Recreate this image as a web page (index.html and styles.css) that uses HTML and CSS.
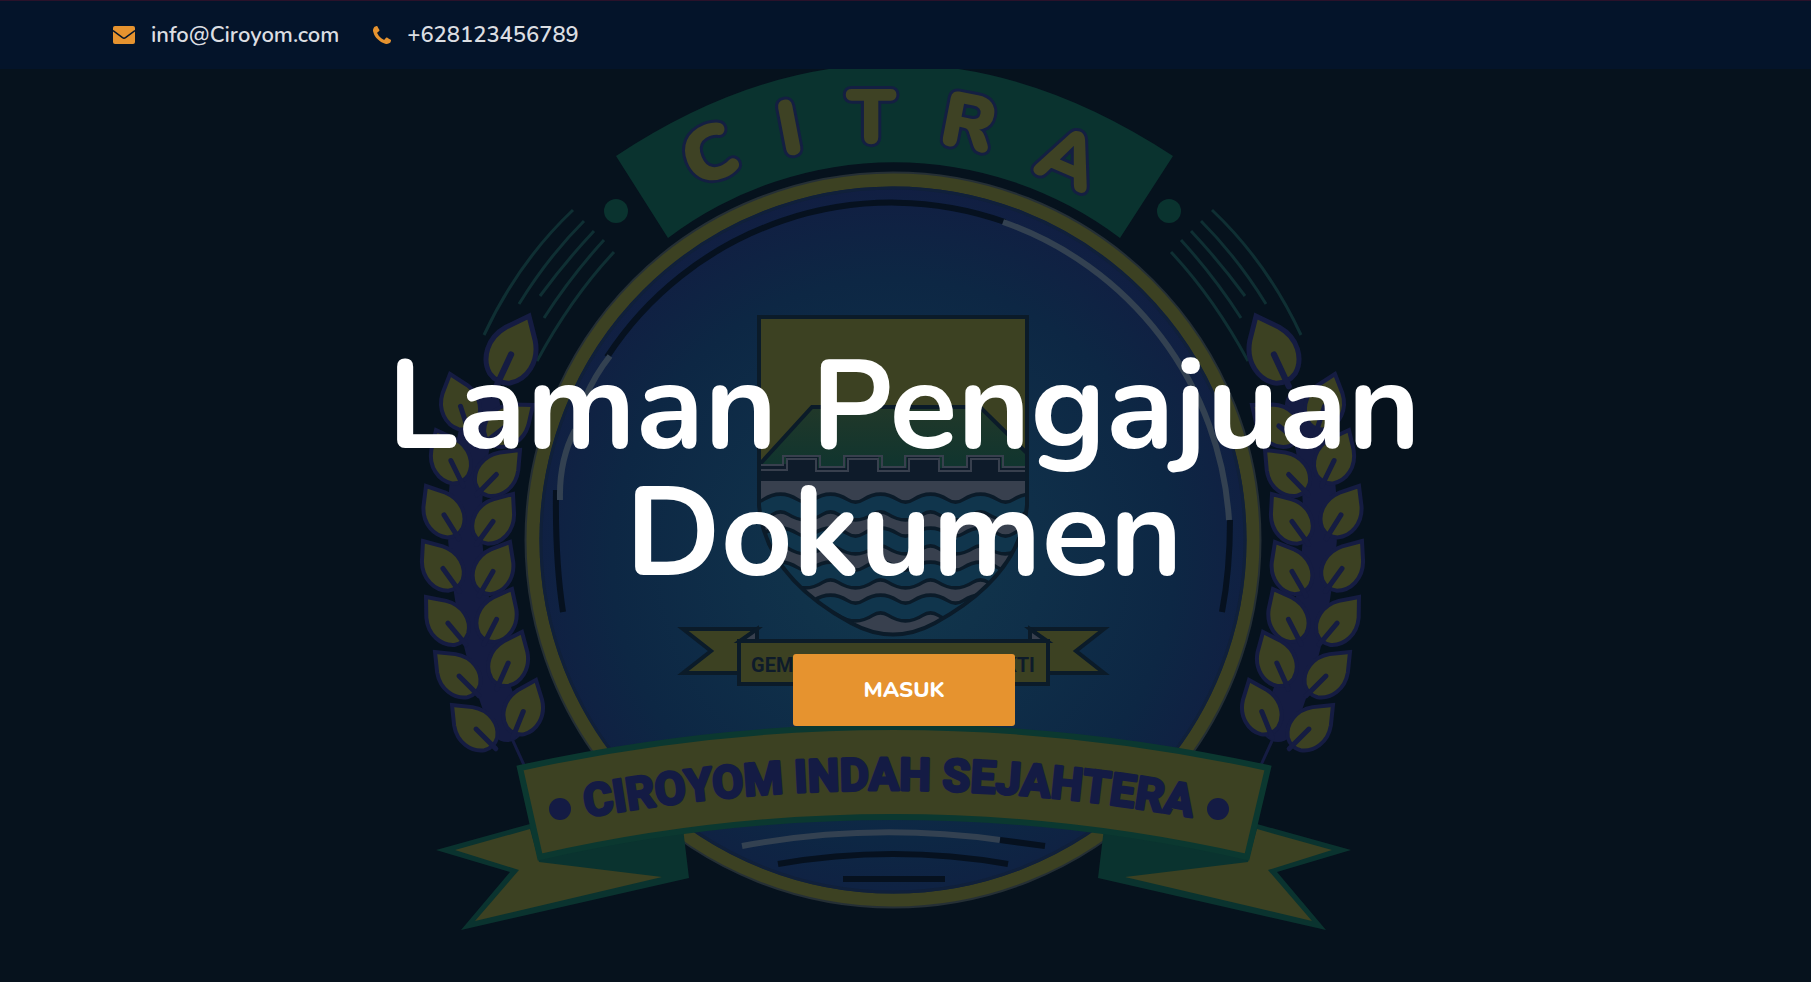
FILE: index.html
```html
<!DOCTYPE html>
<html lang="id">
<head>
<meta charset="utf-8">
<meta name="viewport" content="width=device-width, initial-scale=1">
<title>Ciroyom</title>
<link rel="stylesheet" href="styles.css">
</head>
<body>
<header class="topbar">
  <a class="contact" href="mailto:info@Ciroyom.com">
    <svg class="contact-icon mail" viewBox="0 0 22 18" aria-hidden="true"><rect width="22" height="18" rx="2"/><path class="flap" d="M0 4.500 9.500 11.700Q11 12.600 12.500 11.700L22 4.500"/></svg>
    <span>info@Ciroyom.com</span>
  </a>
  <a class="contact" href="tel:+628123456789">
    <svg class="contact-icon phone" viewBox="0 0 1408 1408" aria-hidden="true"><path d="M1408 1112q0 27-10 70.500t-21 68.500q-21 50-122 106-94 51-186 51-27 0-53-3.500t-57-12.500-47-14.500-55.500-20.500-49.500-18q-98-35-175-83-127-79-264-216t-216-264q-48-77-83-175-3-9-18-49.500t-20.500-55.500-14.500-47-12.500-57-3.500-53q0-92 51-186 56-101 106-122 25-11 68.500-21t70.500-10q14 0 21 3 18 6 53 76 11 19 30 54t35 63.500 31 53.500q3 4 17.500 25t21.500 35.500 7 28.500q0 20-28.500 50t-62 55-62 53-28.500 46q0 9 5 22.500t8.500 20.500 14 24 11.500 19q76 137 174 235t235 174q2 1 19 11.500t24 14 20.500 8.500 22.500 5q18 0 46-28.500t53-62 55-62 50-28.500q14 0 28.500 7t35.500 21.500 25 17.500q25 15 53.500 31t63.500 35 54 30q70 35 76 53 3 7 3 21z"/></svg>
    <span>+628123456789</span>
  </a>
</header>
<main class="hero">
  <svg class="emblem" viewBox="0 69 1811 913" preserveAspectRatio="xMidYMid slice" aria-hidden="true">
    <defs>
      <radialGradient id="disc" gradientUnits="userSpaceOnUse" cx="893" cy="560" r="375">
        <stop offset="0" stop-color="#12384c"/><stop offset=".4" stop-color="#0f2f49"/><stop offset=".75" stop-color="#0d2744"/><stop offset="1" stop-color="#111e42"/>
      </radialGradient>
      <linearGradient id="hill" x1="0" y1="0" x2="0" y2="1"><stop offset="0" stop-color="#213829"/><stop offset="1" stop-color="#0c3430"/></linearGradient>
      <clipPath id="shield"><path d="M760 319H1026V505Q1020 575 935 622Q893 645 851 622Q766 575 760 505Z"/></clipPath>
      <path id="motto" d="M556 823Q889 757 1222 823"/>
      <g id="leaf">
        <path class="leaf" d="M0 0L13 16C23 30 20 47 9 55Q0 60-9 55C-20 47-23 30-13 16Z"/>
        <path class="vein" d="M0 34V62"/>
      </g>
      <g id="side">
        <circle class="green" cx="616" cy="211" r="12"/>
        <path class="ray" d="M573 210Q518 262 484 335M584 221Q548 257 519 304M594 231Q565 262 540 296M604 240Q571 276 544 318M614 252Q571 298 537 361"/>
        <path class="stem" d="M480 400Q455 500 466 560Q473 660 508 730L524 765"/>
        <path class="stem core" d="M483 405Q458 490 467 560Q476 650 507 725"/>
        <use href="#leaf" transform="translate(529 316) rotate(25) scale(1.250)"/>
        <use href="#leaf" transform="translate(450 374) rotate(-18)"/>
        <use href="#leaf" transform="translate(533 405) rotate(52)"/>
        <use href="#leaf" transform="translate(436 430) rotate(-26)"/>
        <use href="#leaf" transform="translate(520 450) rotate(44)"/>
        <use href="#leaf" transform="translate(426 486) rotate(-32)"/>
        <use href="#leaf" transform="translate(513 494) rotate(36)"/>
        <use href="#leaf" transform="translate(423 541) rotate(-36)"/>
        <use href="#leaf" transform="translate(510 542) rotate(30)"/>
        <use href="#leaf" transform="translate(426 597) rotate(-40)"/>
        <use href="#leaf" transform="translate(512 589) rotate(27)"/>
        <use href="#leaf" transform="translate(435 652) rotate(-45)"/>
        <use href="#leaf" transform="translate(522 632) rotate(24)"/>
        <use href="#leaf" transform="translate(452 705) rotate(-45)"/>
        <use href="#leaf" transform="translate(536 680) rotate(22)"/>
      </g>
      <g id="tail">
        <path class="green" d="M530 824L436 850L510 872L461 930L689 878L683 828L541 850Z"/>
        <path class="gold" d="M530 829L455 850L519 870L475 921L662 877L539 862Z"/>
      </g>
      <g id="scroll"><path class="gold edge" d="M683 629H757L740 642V673H683L711 651Z"/><path class="silver edge" d="M740 641L757 629V641Z"/></g>
      <path id="wave" d="M743 0q12.500 8 25 0t25 0t25 0t25 0t25 0t25 0t25 0t25 0t25 0t25 0t25 0t25 0"/>
    </defs>
    <use href="#side"/><use href="#side" transform="translate(1785) scale(-1 1)"/>
    <circle class="halo" cx="893" cy="540" r="367"/>
    <circle cx="893" cy="540" r="356" fill="url(#disc)"/>
    <circle class="ring" cx="893" cy="540" r="360"/>
    <circle class="rim" cx="893" cy="540" r="352"/>
    <path class="dark" d="M607 357A340 340 0 0 1 1005 222M556 490Q555 560 563 612M1230 520Q1230 570 1222 612"/>
    <path class="shine" d="M1003 222A338 338 0 0 1 1229 520M610 356Q595 375 585 398M575 430Q559 460 560 500"/>
    <path class="green" d="M616 156Q893-28 1173 156L1120 238A375 375 0 0 0 668 238Z"/>
    <g class="citra">
      <text transform="translate(709 153) rotate(-22)" y="28">C</text>
      <text transform="translate(789 127) rotate(-11)" y="28">I</text>
      <text transform="translate(871 116)" y="28">T</text>
      <text transform="translate(969 121) rotate(11)" y="28">R</text>
      <text transform="translate(1069 157) rotate(23)" y="28">A</text>
    </g>
    <g clip-path="url(#shield)">
      <path class="gold" d="M758 317H1028V640H758Z"/>
      <path class="edge" fill="url(#hill)" d="M750 475L812 407H980L1036 462V480H750Z"/>
      <path class="wall" d="M755 480V464H786V456H818V468H846V456H878V468H907V456H939V468H968V456H1001V468H1031V482H755Z"/>
      <path class="wall-line" d="M755 470H787V459H816V471H848V459H878V471H909V459H939V471H971V459H999V471H1031"/>
      <path class="wall-line" d="M755 465H783V456H820V467H844V456H882V467H905V456H943V467H967V456H1003V467H1031"/>
      <path fill="#38404e" d="M755 481H1031V640H755Z"/>
      <g class="water-edge"><use href="#wave" y="507"/><use href="#wave" y="541"/><use href="#wave" y="575"/><use href="#wave" y="608"/></g>
      <g class="water"><use href="#wave" y="507"/><use href="#wave" y="541"/><use href="#wave" y="575"/><use href="#wave" y="608"/></g>
    </g>
    <path class="edge open" d="M759 317H1027V505Q1021 576 935 623Q893 646 851 623Q765 576 759 505Z"/>
    <use href="#scroll"/><use href="#scroll" transform="translate(1787) scale(-1 1)"/>
    <path class="gold edge" d="M739 641H1048V684H739Z"/>
    <text class="gemah" x="893" y="672">GEMAH RIPAH WIBAWA MUKTI</text>
    <use href="#tail"/><use href="#tail" transform="translate(1787) scale(-1 1)"/>
    <path class="gold ribbon" d="M520 768Q893 686 1268 768L1247 857Q893 777 540 857Z"/>
    <circle class="navy" cx="560" cy="809" r="11"/><circle class="navy" cx="1218" cy="809" r="11"/>
    <text class="motto"><textPath href="#motto" startOffset="50%">CIROYOM INDAH SEJAHTERA</textPath></text>
    <path class="shine" d="M742 846Q870 822 1000 840"/>
    <path class="dark" d="M1000 840L1045 846M778 864Q893 844 1008 864M843 879H945"/>
  </svg>
  <div class="hero-content">
    <h1 class="hero-title">Laman Pengajuan Dokumen</h1>
    <a class="hero-button" href="#masuk">MASUK</a>
  </div>
</main>
</body>
</html>
```
FILE: styles.css
```css
* { box-sizing: border-box; }
body {
  margin: 0;
  min-height: 100vh;
  display: flex;
  flex-direction: column;
  background: #06121d;
  color: #fff;
  font-family: Nunito, Lato, sans-serif;
}
.topbar {
  display: flex;
  align-items: center;
  gap: 34px;
  height: 69px;
  padding: 0 113px;
  background: #04142a;
  border-top: 1px solid #2a122a;
}
.contact {
  display: flex;
  align-items: center;
  gap: 16px;
  color: #dcdee2;
  font-size: 22px;
  line-height: 34px;
  font-weight: 600;
  text-decoration: none;
}
.contact-icon { fill: #e6932f; }
.mail { width: 22px; height: 18px; }
.phone { width: 18px; height: 18px; }
.flap { fill: none; stroke: #04142a; stroke-width: 1.5; }
.hero {
  position: relative;
  flex: 1;
  display: flex;
  align-items: center;
  justify-content: center;
  overflow: hidden;
  padding-right: 3px;
}
.emblem { position: absolute; inset: 0; width: 100%; height: 100%; }
.hero-content {
  position: relative;
  display: flex;
  flex-direction: column;
  align-items: center;
  gap: 56px;
  width: 100%;
  max-width: 1180px;
  padding-top: 18px;
}
.hero-title {
  margin: 0;
  font-size: 125px;
  line-height: 127px;
  font-weight: 700;
  text-align: center;
}
.hero-button {
  padding: 19px 70px;
  border-radius: 3px;
  background: #e6932f;
  color: #fff;
  font-size: 22px;
  line-height: 34px;
  font-weight: 800;
  text-decoration: none;
}
.green { fill: #0a332f; }
.gold { fill: #3c4122; }
.silver { fill: #38404e; }
.navy { fill: #141b44; }
.leaf { fill: #3c4122; stroke: #151c42; stroke-width: 4; }
.vein { fill: none; stroke: #151c42; stroke-width: 5; stroke-linecap: round; }
.stem { fill: none; stroke: #151c42; stroke-width: 3; }
.core { stroke-width: 34; stroke-linecap: round; }
.ray { fill: none; stroke: #0f2f33; stroke-width: 3; }
.halo { fill: none; stroke: #252f35; stroke-width: 3; }
.ring { fill: none; stroke: #3c4122; stroke-width: 13; }
.rim { fill: none; stroke: #10203a; stroke-width: 3; }
.dark { fill: none; stroke: #06111f; stroke-width: 6; }
.shine { fill: none; stroke: #334151; stroke-width: 6; }
.edge { stroke: #0b1b29; stroke-width: 4; }
.open { fill: none; }
.wall { fill: #0e1b2a; }
.wall-line { fill: none; stroke: #38404e; stroke-width: 2; }
.water { fill: none; stroke: #10354c; stroke-width: 14; }
.water-edge { fill: none; stroke: #0b1b29; stroke-width: 21; }
.ribbon { stroke: #0b3830; stroke-width: 6; }
.citra text {
  font: 900 78px Nunito, Lato, sans-serif;
  text-anchor: middle;
  fill: #3e4224;
  stroke: #141f42;
  stroke-width: 6px;
  stroke-linejoin: round;
  paint-order: stroke;
}
.gemah {
  font: 700 20px Roboto, sans-serif;
  text-anchor: middle;
  fill: #0e1b2a;
}
.motto {
  font: 700 45px Roboto, sans-serif;
  text-anchor: middle;
  fill: #141b44;
  stroke: #141b44;
  stroke-width: 3px;
  stroke-linejoin: round;
}
```
